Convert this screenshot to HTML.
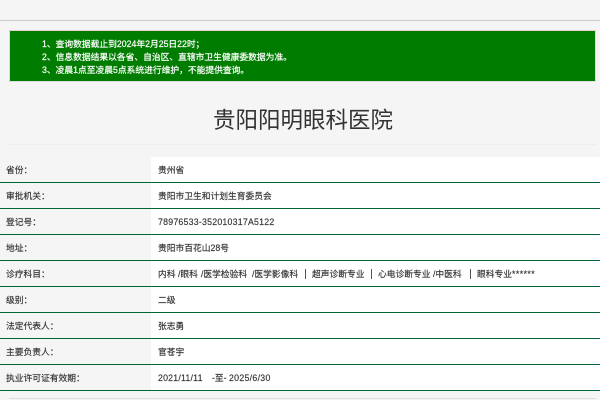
<!DOCTYPE html>
<html lang="zh">
<head>
<meta charset="utf-8">
<style>
html,body{margin:0;padding:0;width:600px;height:400px;overflow:hidden;background:#f5f5f5;}
body{position:relative;font-family:"Liberation Sans","Noto Sans CJK SC",sans-serif;color:#333;}
.abs{position:absolute;}
.top{left:0;top:20px;width:600px;height:1px;background:#ccc;}
.banner{left:9px;top:30px;width:587px;height:52px;background:#007d00;border:1px solid #ddd;border-top-color:#ebccd1;box-sizing:border-box;}
.bl{position:absolute;left:42px;color:#fff;font-size:8.75px;line-height:12px;white-space:nowrap;-webkit-text-stroke:.2px #fff;}
.title{left:0;width:606px;top:104px;text-align:center;font-size:22.5px;line-height:33px;color:#333;white-space:nowrap;}
.hr1{left:9px;top:144px;width:587px;height:1px;background:#eee;}
.hr2{left:9px;top:398px;width:587px;height:1px;background:#ddd;}
.white{left:151px;top:157px;width:449px;height:234px;background:#fff;}
.line{left:0;width:600px;height:1px;background:#006633;}
.k,.v{position:absolute;font-size:8.75px;line-height:12px;white-space:nowrap;color:#333;-webkit-text-stroke:.15px #333;}
.k{left:6px;}
.v{left:158px;}
.n{letter-spacing:.24px;}
.p{position:absolute;top:268px;font-size:8.75px;line-height:12px;white-space:nowrap;color:#333;-webkit-text-stroke:.15px #333;}
.b{position:absolute;top:269px;width:1px;height:10px;background:#555;}
</style>
</head>
<body>
<div class="abs top"></div>
<div class="abs banner"></div>
<div class="bl" style="top:38px">1、查询数据截止到2024年2月25日22时；</div>
<div class="bl" style="top:51px">2、信息数据结果以各省、自治区、直辖市卫生健康委数据为准。</div>
<div class="bl" style="top:64px">3、凌晨1点至凌晨5点系统进行维护，不能提供查询。</div>
<div class="abs title">贵阳阳明眼科医院</div>
<div class="abs hr1"></div>
<div class="abs white"></div>
<div class="abs line" style="top:182px"></div>
<div class="abs line" style="top:208px"></div>
<div class="abs line" style="top:234px"></div>
<div class="abs line" style="top:260px"></div>
<div class="abs line" style="top:286px"></div>
<div class="abs line" style="top:312px"></div>
<div class="abs line" style="top:338px"></div>
<div class="abs line" style="top:364px"></div>
<div class="abs line" style="top:390px"></div>
<div class="abs hr2"></div>
<div class="k" style="top:164px">省份：</div><div class="v" style="top:164px">贵州省</div>
<div class="k" style="top:190px">审批机关：</div><div class="v" style="top:190px">贵阳市卫生和计划生育委员会</div>
<div class="k" style="top:216px">登记号：</div><div class="v n" style="top:216px">78976533-352010317A5122</div>
<div class="k" style="top:242px">地址：</div><div class="v" style="top:242px">贵阳市百花山28号</div>
<div class="k" style="top:268px">诊疗科目：</div>
<span class="p" style="left:158px">内科</span><span class="p" style="left:178px">/眼科</span><span class="p" style="left:201px">/医学检验科</span><span class="p" style="left:252px">/医学影像科</span><span class="b" style="left:305px"></span><span class="p" style="left:312px">超声诊断专业</span><span class="b" style="left:371px"></span><span class="p" style="left:378px">心电诊断专业</span><span class="p" style="left:433px">/中医科</span><span class="b" style="left:470px"></span><span class="p" style="left:477px">眼科专业</span><span class="p" style="left:512px;letter-spacing:.45px">******</span>
<div class="k" style="top:294px">级别：</div><div class="v" style="top:294px">二级</div>
<div class="k" style="top:320px">法定代表人：</div><div class="v" style="top:320px">张志勇</div>
<div class="k" style="top:346px">主要负责人：</div><div class="v" style="top:346px">官苍宇</div>
<div class="k" style="top:372px">执业许可证有效期：</div>
<span class="p" style="top:372px;left:158px;letter-spacing:.22px">2021/11/11</span><span class="p" style="top:372px;left:212px">-至-</span><span class="p" style="top:372px;left:229px;letter-spacing:.3px">2025/6/30</span>
</body>
</html>
